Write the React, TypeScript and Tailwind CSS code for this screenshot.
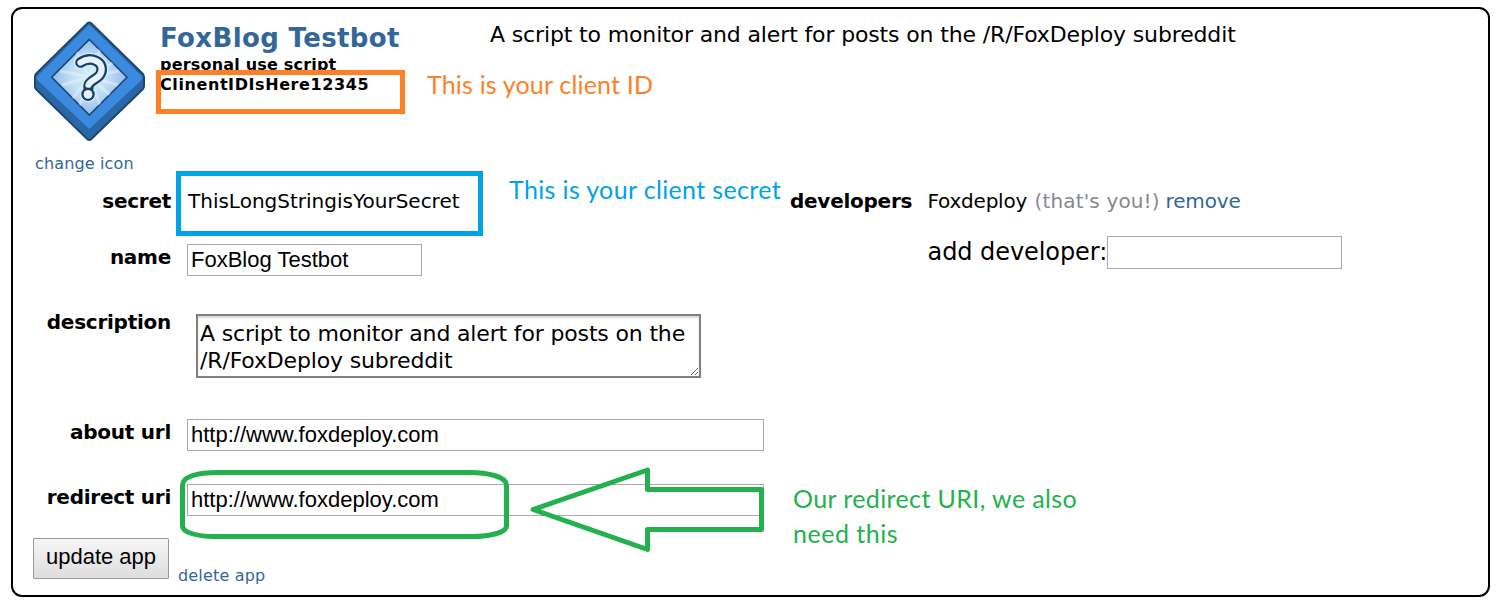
import React from "react";

function AppIcon() {
  return (
    <svg width="112" height="121" viewBox="0 0 112 121" className="block">
      <defs>
        <radialGradient id="glow" cx="50%" cy="50%" r="50%">
          <stop offset="0" stopColor="#d3ecef" />
          <stop offset="0.45" stopColor="#c4e0f6" />
          <stop offset="1" stopColor="#93bdec" />
        </radialGradient>
        <clipPath id="pane">
          <path d="M55.3 18.5 93 56.3 55.3 94 17.8 56.3Z" />
        </clipPath>
      </defs>
      <path
        d="M53.5 2.2Q55.3 1 57.1 2.2L109 53Q110 54.5 110 56.5V64.5Q110 66.5 109 68L57.1 118.3Q55.3 119.5 53.5 118.3L1.8 68Q1 66.5 1 64.5V56.5Q1 54.5 1.8 53Z"
        fill="#2b66a8"
        stroke="#1f476e"
        strokeWidth="2"
        strokeLinejoin="round"
      />
      <path d="M55.3 3.5 108.5 56 107.5 59 55.3 108 3.3 59 2.5 56Z" fill="#3a8ae0" />
      <path
        d="M55.3 18.5 93 56.3 55.3 94 17.8 56.3Z"
        fill="url(#glow)"
        stroke="#1f4570"
        strokeWidth="1.6"
      />
      <g clipPath="url(#pane)" stroke="#eaf5ff" strokeOpacity="0.45" strokeWidth="3">
        <path d="M55 56 42 30M55 56 66 28M55 56 26 50M55 56 28 64M55 56 85 50M55 56 84 64M55 56 38 78M55 56 45 86M55 56 67 86M55 56 76 74M55 56 82 40" />
      </g>
      <g fill="none" strokeLinecap="round" strokeLinejoin="round">
        <path d="M46.500 41.500C51 38.600 57 37.600 62 39.800C69 43 69 50.500 65 55C61 59 55.500 60 54.500 67" stroke="#cdeef2" strokeWidth="13.500" />
        <circle cx="54" cy="73.300" r="8" fill="#cdeef2" />
        <path d="M46.500 41.500C51 38.600 57 37.600 62 39.800C69 43 69 50.500 65 55C61 59 55.500 60 54.500 65" stroke="#19406b" strokeWidth="10.600" />
        <circle cx="54" cy="73.300" r="6.700" fill="#19406b" />
        <path d="M46.500 41.500C51 38.600 57 37.600 62 39.800C69 43 69 50.500 65 55C61 59 55.500 60 54.500 64" stroke="#e9f2fc" strokeWidth="6.200" />
        <circle cx="54" cy="73.300" r="4.400" fill="#e9f2fc" />
        <path d="M50.500 67.800H58.500" stroke="#19406b" strokeWidth="2" />
      </g>
    </svg>
  );
}

function Label({ children }: { children: React.ReactNode }) {
  return (
    <div className="w-[158px] shrink-0 text-right text-[20px] leading-6 font-bold tracking-[-0.26px] whitespace-nowrap">
      {children}
    </div>
  );
}

const field =
  "block h-8 border border-[#a9a9a9] bg-white px-[3px] pt-0 pb-[2px] font-['Liberation_Sans',sans-serif] text-[22px] text-black outline-none";

export default function App() {
  return (
    <div className="h-[613px] w-[1503px] overflow-hidden bg-white pt-[7px] pl-[11px] font-['DejaVu_Sans',sans-serif] text-black">
      <div className="relative flex h-[590px] w-[1479px] flex-col rounded-[11px] border-2 border-black">
        <header className="flex h-[162px] shrink-0 whitespace-nowrap">
          <div className="w-[147px] pt-3 pl-[21px]">
            <AppIcon />
            <a className="mt-3 ml-px block text-[16px] leading-5 tracking-[0.15px] text-[#336699]">change icon</a>
          </div>
          <div className="w-[330px] pt-[13px] font-bold">
            <h1 className="text-[26px] leading-[33px] tracking-[0.37px] text-[#336699]">FoxBlog Testbot</h1>
            <p className="text-[16px] leading-5 tracking-[0.19px]">personal use script</p>
            <p className="text-[16px] leading-5 tracking-[0.59px]">ClinentIDIsHere12345</p>
          </div>
          <p className="pt-3 text-[22px] leading-7 tracking-[-0.14px]">
            A script to monitor and alert for posts on the /R/FoxDeploy subreddit
          </p>
        </header>

        <div className="flex">
          <div className="w-[777px] shrink-0">
            <div className="flex h-[65px] pt-[18px]">
              <Label>secret</Label>
              <span className="ml-[17px] text-[20px] leading-6">ThisLongStringisYourSecret</span>
            </div>
            <div className="flex h-[69px] pt-[9px]">
              <Label>name</Label>
              <input className={`${field} -mt-px ml-4 w-[235px]`} defaultValue="FoxBlog Testbot" />
            </div>
            <div className="flex h-[105px] pt-[5px]">
              <Label>description</Label>
              <textarea
                className="mt-1 ml-[25px] block h-16 w-[505px] overflow-hidden border-2 border-[#808080] bg-white px-[2px] py-1 text-[22px] leading-[27px] tracking-[-0.16px] text-black shadow-[inset_0_2px_2px_#d8d8d8] outline-none"
                defaultValue="A script to monitor and alert for posts on the /R/FoxDeploy subreddit"
              />
            </div>
            <div className="flex h-[65px] pt-[10px]">
              <Label>about url</Label>
              <input className={`${field} -mt-px ml-4 w-[577px]`} defaultValue="http://www.foxdeploy.com" />
            </div>
            <div className="flex h-[63px] pt-[10px]">
              <Label>redirect uri</Label>
              <input className={`${field} -mt-px ml-4 w-[577px]`} defaultValue="http://www.foxdeploy.com" />
            </div>
            <div className="flex pl-5">
              <button className="h-[41px] w-[136px] rounded-[1px] border border-[#999999] bg-linear-to-b from-[#f6f6f6] to-[#dddddd] pb-[3px] font-['Liberation_Sans',sans-serif] text-[22px] leading-8 whitespace-nowrap">
                update app
              </button>
              <a className="mt-7 ml-[9px] text-[16px] leading-5 tracking-[0.18px] text-[#336699]">delete app</a>
            </div>
          </div>

          <div className="flex pt-[18px] whitespace-nowrap">
            <div className="w-[136px] text-[20px] leading-6 font-bold tracking-[-0.26px]">developers</div>
            <div>
              <div className="flex pl-[1.5px] text-[20px] leading-6">
                <span className="w-[107px] tracking-[-0.22px]">Foxdeploy</span>
                <span className="w-[131px] tracking-[0.15px] text-[#888888]">(that's you!)</span>
                <a className="tracking-[-0.13px] text-[#336699]">remove</a>
              </div>
              <div className="mt-[23px] flex">
                <label className="w-[181px] pl-[1.5px] text-[24px] leading-[33px] tracking-[-0.07px]">add developer:</label>
                <input className="h-[33px] w-[235px] border border-[#a9a9a9] bg-white outline-none" />
              </div>
            </div>
          </div>
        </div>

        {/* Callouts drawn over the form */}
        <div className="absolute top-[61px] left-[143px] h-11 w-[249px] border-5 border-[#ff7f27]" />
        <div className="absolute top-[162px] left-[163px] h-[65px] w-[307px] border-5 border-[#00a2e8]" />
        <p className="absolute top-[59px] left-[414px] font-['Lato',sans-serif] text-[25px] leading-8 tracking-[0.18px] whitespace-nowrap text-[#ff7f27]">
          This is your client ID
        </p>
        <p className="absolute top-[164px] left-[496px] font-['Lato',sans-serif] text-[25px] leading-8 tracking-[0.36px] whitespace-nowrap text-[#00a2e8]">
          This is your client secret
        </p>
        <p className="absolute top-[472px] left-[780px] font-['Lato',sans-serif] text-[25px] leading-[35px] tracking-[0.38px] whitespace-nowrap text-[#22b14c]">
          Our redirect URI, we also
          <br />
          <span className="tracking-[0.52px]">need this</span>
        </p>
        <svg
          className="absolute top-[456px] left-[165px]"
          width="590"
          height="92"
          viewBox="178 465 590 92"
          fill="none"
          stroke="#22b14c"
          strokeWidth="5"
          strokeLinejoin="round"
        >
          <path d="M218 472.500H469C489 472.500 506.500 477 506.500 485V526C506.500 532 492 536.500 472 536.500H214C196 536.500 182.500 532 182.500 526V485C182.500 477 196 472.500 218 472.500Z" />
          <path d="M533 509.500 647.500 470V489.500H761.500V529.500H647.500V549.500Z" />
        </svg>
      </div>
    </div>
  );
}
